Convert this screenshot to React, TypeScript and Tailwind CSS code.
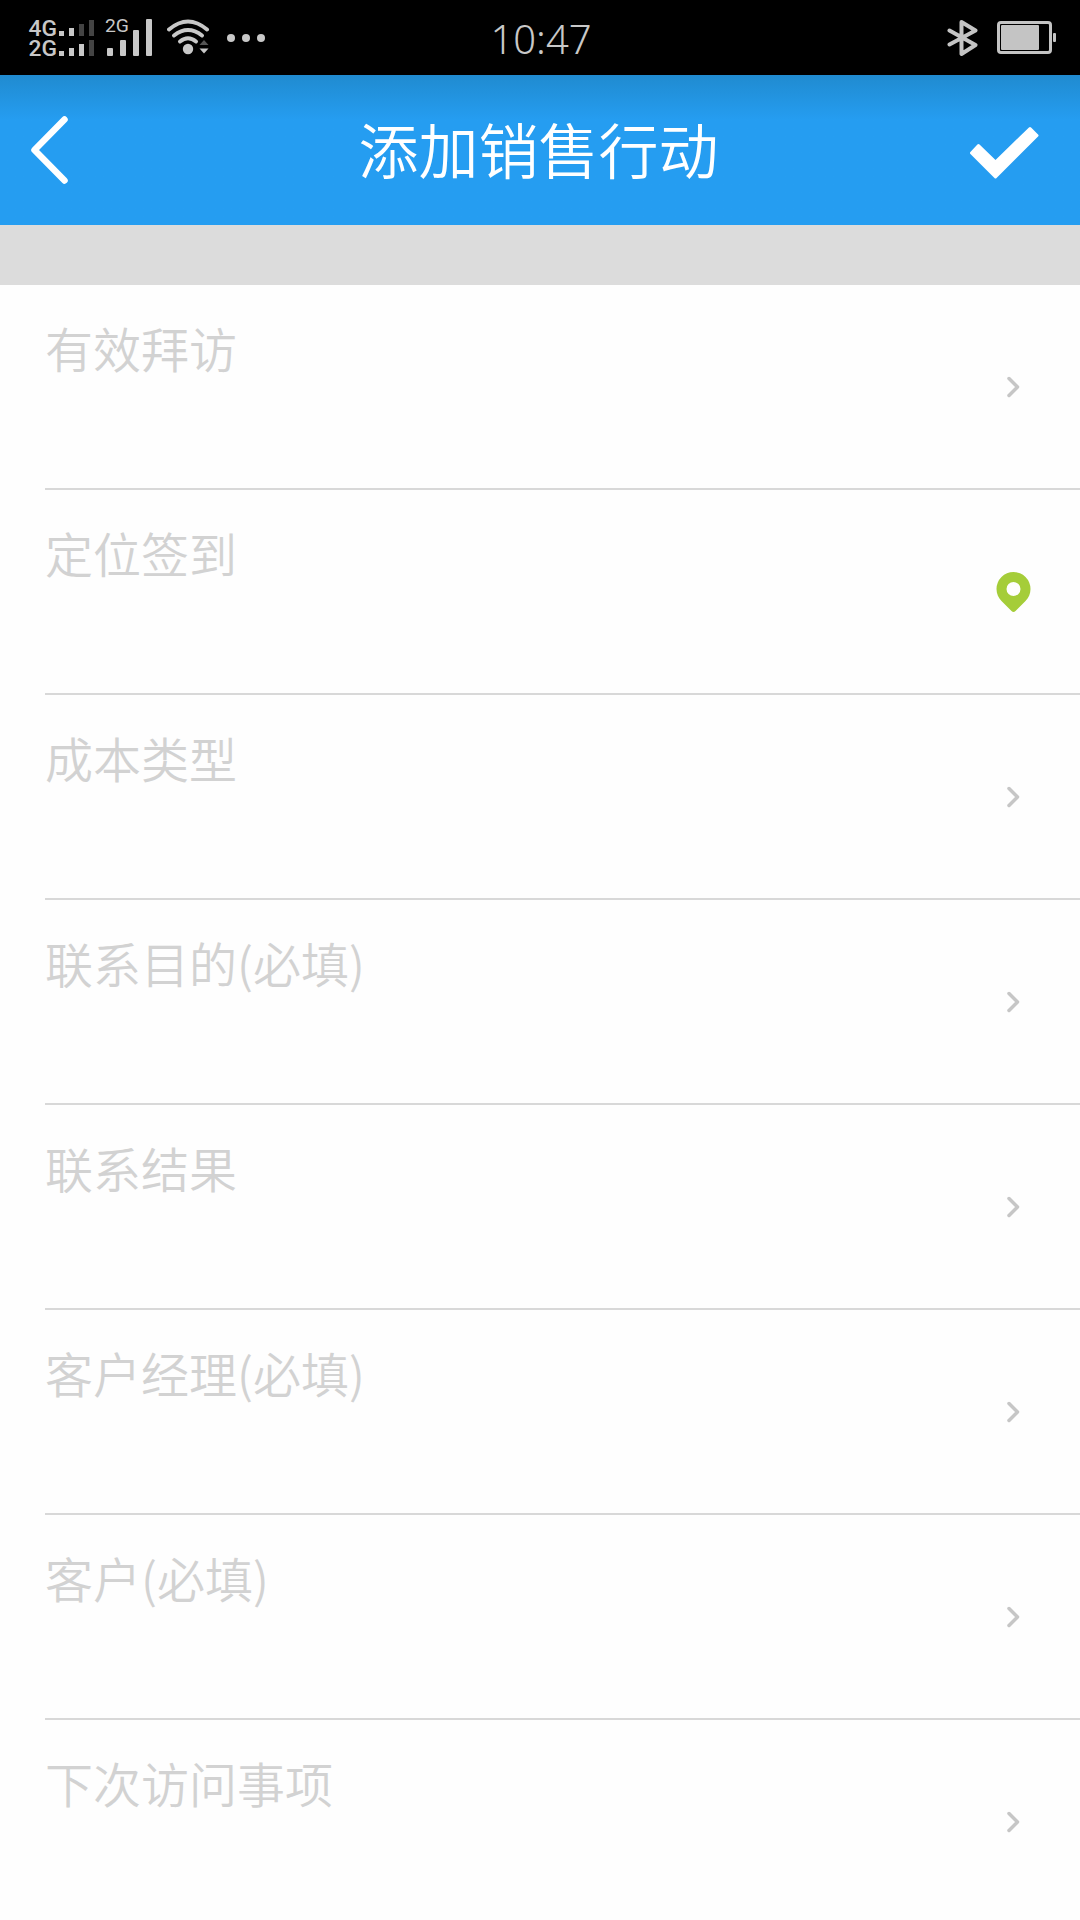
type Field = {
  label: string;
  icon: "chevron" | "pin";
};

const fields: Field[] = [
  { label: "有效拜访", icon: "chevron" },
  { label: "定位签到", icon: "pin" },
  { label: "成本类型", icon: "chevron" },
  { label: "联系目的(必填)", icon: "chevron" },
  { label: "联系结果", icon: "chevron" },
  { label: "客户经理(必填)", icon: "chevron" },
  { label: "客户(必填)", icon: "chevron" },
  { label: "下次访问事项", icon: "chevron" },
];

const DualSignalIcon = () => (
  <svg
    className="h-[38px] w-[66px] overflow-visible"
    viewBox="0 0 66 38"
    fill="#c8c8c8"
  >
    <g fontFamily="Roboto, sans-serif" fontSize="22" fontWeight="500">
      <text x="-0.5" y="17" textLength="28.5" lengthAdjust="spacingAndGlyphs">
        4G
      </text>
      <text x="-0.5" y="37" textLength="28.5" lengthAdjust="spacingAndGlyphs">
        2G
      </text>
    </g>
    <path d="M30 12h5v5h-5zM40 9h5v8h-5z" />
    <path d="M50 5h5v12h-5zM60 1h5v16h-5z" fill="#444" />
    <path d="M30 32h5v5h-5zM40 29h5v8h-5zM50 25h5v12h-5z" />
    <path d="M60 21h5v16h-5z" fill="#444" />
  </svg>
);

const SignalIcon = () => (
  <svg
    className="ml-2.5 h-[38px] w-12 overflow-visible"
    viewBox="0 0 48 38"
    fill="#c8c8c8"
  >
    <text
      x="0"
      y="13"
      fontFamily="Roboto, sans-serif"
      fontSize="18"
      textLength="24"
      lengthAdjust="spacingAndGlyphs"
    >
      2G
    </text>
    <rect x="2" y="29" width="6" height="8" rx="1" />
    <rect x="15" y="21" width="6" height="16" rx="1" />
    <rect x="28" y="11" width="6" height="26" rx="1" />
    <rect x="41" y="0" width="6" height="37" rx="1" />
  </svg>
);

const WifiIcon = () => (
  <svg className="ml-3.5 h-[38px] w-[43px]" viewBox="0 0 43 38" fill="none">
    <g stroke="#c8c8c8" strokeWidth="4" strokeLinecap="round">
      <path d="M2 10.5Q21 -5.5 40 10.5" />
      <path d="M7 16.5Q21 5.5 35 16.5" />
      <path d="M13 22.5Q21 16 29 22.5" />
    </g>
    <circle cx="21" cy="30" r="5.2" fill="#c8c8c8" />
    <path d="M32.5 26L37 21L41.5 26Z" fill="#555" />
    <path d="M32.5 29.5L37 34.5L41.5 29.5Z" fill="#c8c8c8" />
  </svg>
);

const BluetoothIcon = () => (
  <svg
    className="h-[38px] w-8"
    viewBox="0 0 32 38"
    fill="none"
    stroke="#c4c4c4"
    strokeWidth="4"
    strokeLinecap="round"
    strokeLinejoin="round"
  >
    <path d="M2.5 11.5L28.5 26L14.5 35V3L28.5 11.5L2.5 25.5" />
  </svg>
);

const BatteryIcon = () => (
  <svg className="ml-[18px] h-[34px] w-[60px]" viewBox="0 0 60 34" fill="none">
    <rect
      x="1.5"
      y="1.5"
      width="52"
      height="30"
      rx="2.5"
      stroke="#c4c4c4"
      strokeWidth="3"
    />
    <rect x="4" y="4" width="38" height="25" rx="1" fill="#c4c4c4" />
    <rect x="56" y="12" width="3" height="9" rx="1" fill="#c4c4c4" />
  </svg>
);

const StatusBar = () => (
  <div className="grid h-[75px] shrink-0 grid-cols-3 items-center bg-black text-[#c8c8c8]">
    <div className="flex items-center pl-[29px]">
      <DualSignalIcon />
      <SignalIcon />
      <WifiIcon />
      <div className="ml-[17px] flex gap-[7px]">
        <span className="size-2 rounded-full bg-[#c8c8c8]" />
        <span className="size-2 rounded-full bg-[#c8c8c8]" />
        <span className="size-2 rounded-full bg-[#c8c8c8]" />
      </div>
    </div>
    <div className="pt-0.5 pl-0.5 text-center font-['Noto_Sans',sans-serif] text-[40px] leading-none font-[350]">
      10:47
    </div>
    <div className="flex items-center justify-end pr-[23px]">
      <BluetoothIcon />
      <BatteryIcon />
    </div>
  </div>
);

const Header = () => (
  <header className="flex h-[150px] shrink-0 items-center justify-between bg-[#259df1] bg-linear-to-b from-[#208bd0] to-[#259df1] to-30% pr-10 pl-[29px] text-white">
    <button type="button" aria-label="返回" className="w-20">
      <svg
        className="h-[70px] w-10"
        viewBox="0 0 40 70"
        fill="none"
        stroke="currentColor"
        strokeWidth="6.5"
        strokeLinecap="round"
        strokeLinejoin="round"
      >
        <path d="M35.5 4.5L5.5 35L35.5 65.5" />
      </svg>
    </button>
    <h1 className="pb-1 text-[60px] leading-[90px] font-[350]">
      添加销售行动
    </h1>
    <button type="button" aria-label="确定" className="w-[72px] pt-1">
      <svg
        className="h-[54px] w-[72px]"
        viewBox="0 0 72 54"
        fill="currentColor"
        stroke="currentColor"
        strokeWidth="3"
        strokeLinejoin="round"
      >
        <path d="M3.5 28L10.5 20.5L27.5 37L62 3.5L69 10.5L27.5 52Z" />
      </svg>
    </button>
  </header>
);

const ChevronIcon = () => (
  <svg
    className="h-6 w-[35px]"
    viewBox="0 0 35 24"
    fill="none"
    stroke="#c6c6c6"
    strokeWidth="3.5"
    strokeLinecap="round"
    strokeLinejoin="round"
  >
    <path d="M13 3.5L21.5 12L13 20.5" />
  </svg>
);

const PinIcon = () => (
  <svg className="h-10 w-[35px]" viewBox="0 0 35 40" fill="#a5cd39">
    <path
      fillRule="evenodd"
      d="M17.5 0A17 17 0 0 0 .5 17C.5 22 2.5 26 5.5 29L15.5 39Q17.5 41 19.5 39L29.5 29C32.5 26 34.5 22 34.5 17A17 17 0 0 0 17.5 0ZM17.5 10A7 7 0 1 1 17.5 24A7 7 0 1 1 17.5 10Z"
    />
  </svg>
);

const FieldRow = ({ label, icon }: Field) => (
  <li className="flex h-[205px] shrink-0 justify-between border-b-2 border-[#d8d8d8] pr-[49px]">
    <span className="pt-[26px] text-[48px] leading-[72px] font-[350] text-[#d2d2d2]">
      {label}
    </span>
    <span className="flex items-center">
      {icon === "pin" ? <PinIcon /> : <ChevronIcon />}
    </span>
  </li>
);

const App = () => {
  return (
    <div className="flex h-[1920px] w-[1080px] flex-col overflow-hidden bg-[#fefefe] font-['Noto_Sans_CJK_SC',sans-serif]">
      <StatusBar />
      <Header />
      <div className="h-[60px] shrink-0 bg-[#dcdcdc]" />
      <ul className="flex flex-col pl-[45px]">
        {fields.map((field) => (
          <FieldRow key={field.label} {...field} />
        ))}
      </ul>
    </div>
  );
};

export default App;
